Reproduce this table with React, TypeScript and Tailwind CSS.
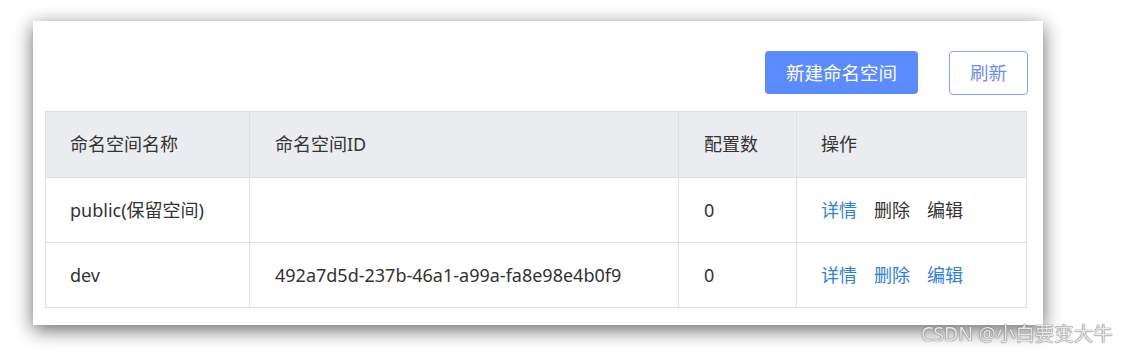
import React from "react";

interface Namespace {
  name: string;
  id: string;
  count: number;
  reserved?: boolean;
}

const rows: Namespace[] = [
  { name: "public(保留空间)", id: "", count: 0, reserved: true },
  { name: "dev", id: "492a7d5d-237b-46a1-a99a-fa8e98e4b0f9", count: 0 },
];

const font = { fontFamily: '"Noto Sans", "Noto Sans CJK SC", sans-serif' };

const App: React.FC = () => {
  return (
    <div
      className="relative w-[1135px] h-[352px] bg-white overflow-hidden text-[#333]"
      style={font}
    >
      <div className="ml-[33px] mt-[21px] w-[1010px] h-[304px] bg-white shadow-[0_5px_18px_rgba(0,0,0,0.6)] pl-[12px] pr-[15px] pt-[30px]">
        {/* toolbar */}
        <div className="flex justify-end items-start gap-[31px] h-[44px]">
          <button className="w-[153px] h-[43px] rounded-[4px] bg-[#5b8cff] text-white text-[18.5px]">
            新建命名空间
          </button>
          <button className="w-[79px] h-[44px] rounded-[4px] border border-[#7fa2ff] bg-white text-[#6d8ef5] text-[18.5px]">
            刷新
          </button>
        </div>

        <table className="mt-[16px] w-[981px] border-collapse text-[18px] table-fixed">
          <colgroup>
            <col className="w-[204px]" />
            <col className="w-[429px]" />
            <col className="w-[118px]" />
            <col className="w-[230px]" />
          </colgroup>
          <thead>
            <tr className="h-[66px] bg-[#ebecf0]">
              <th className="border border-[#dcdfe6] pl-[24px] text-left font-normal">命名空间名称</th>
              <th className="border border-[#dcdfe6] pl-[25px] text-left font-normal">命名空间ID</th>
              <th className="border border-[#dcdfe6] pl-[25px] text-left font-normal">配置数</th>
              <th className="border border-[#dcdfe6] pl-[24px] text-left font-normal">操作</th>
            </tr>
          </thead>
          <tbody>
            {rows.map((r) => (
              <tr key={r.name} className="h-[65px]">
                <td className="border border-[#dcdfe6] pl-[24px]">{r.name}</td>
                <td className="border border-[#dcdfe6] pl-[25px]">{r.id}</td>
                <td className="border border-[#dcdfe6] pl-[25px]">{r.count}</td>
                <td className="border border-[#dcdfe6] pl-[24px]">
                  <div className="flex gap-[17px]">
                    <a className="text-[#2f7fe0]">详情</a>
                    <a className={r.reserved ? "text-[#333]" : "text-[#2f7fe0]"}>删除</a>
                    <a className={r.reserved ? "text-[#333]" : "text-[#2f7fe0]"}>编辑</a>
                  </div>
                </td>
              </tr>
            ))}
          </tbody>
        </table>
      </div>

      <span className="absolute left-[921px] top-[319px] text-[19.5px] text-[#e8e8e8] [text-shadow:0_0_1px_#666,0_0_1px_#666]">
        CSDN @小白要变大牛
      </span>
    </div>
  );
};

export default App;
